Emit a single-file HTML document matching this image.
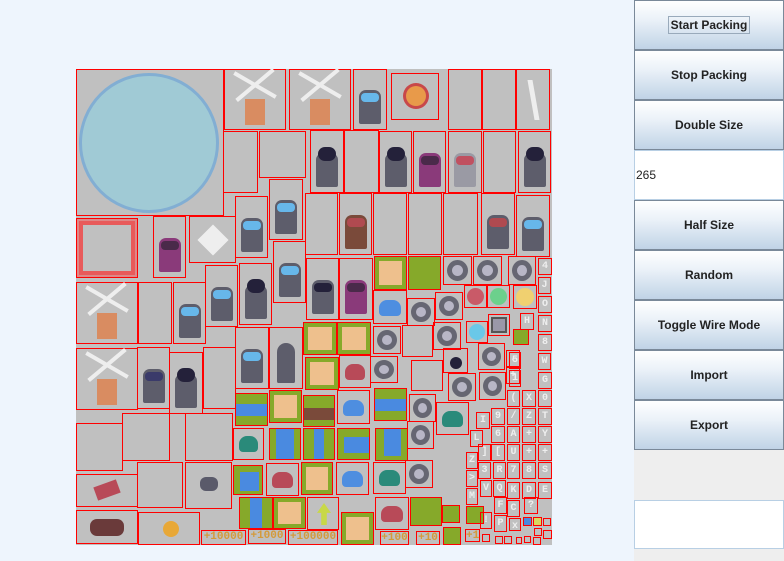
<!DOCTYPE html>
<html><head><meta charset="utf-8"><style>
*{margin:0;padding:0;box-sizing:border-box}
body{width:784px;height:561px;background:#eef5fd;position:relative;overflow:hidden;font-family:"Liberation Sans",sans-serif}
#atlas{position:absolute;left:76px;top:69px;width:476px;height:476px;background:#c0c0c0}
.b{position:absolute;border:1px solid #f00}
.tw{position:absolute;left:50%;bottom:5px;width:22px;height:34px;margin-left:-11px;background:#5d5d6b;border-radius:7px 7px 2px 2px}
.tw i{position:absolute;left:2px;right:2px;top:3px;height:9px;background:#67b7ea;border-radius:4px}
.tw.p{background:#8a3a7a}.tw.p i{background:#4a2a4a}
.tw.k i{background:#24213a;height:14px;top:-6px;border-radius:7px}
.wm{position:absolute;left:50%;bottom:4px;width:20px;height:26px;margin-left:-10px;background:#d98c61}
.wm:before{content:"";position:absolute;left:-14px;top:-16px;width:48px;height:4px;background:#eee;transform:rotate(30deg)}
.wm:after{content:"";position:absolute;left:-14px;top:-16px;width:48px;height:4px;background:#eee;transform:rotate(-40deg)}
.gr{background:#86a92a}
.sd{position:absolute;left:4px;top:4px;right:4px;bottom:4px;background:#eec08d}
.rg{position:absolute;left:3px;top:3px;right:3px;bottom:3px;border-radius:50%;border:5px solid #666672;background:#b8b6c6}
.sl{position:absolute;left:5px;right:5px;bottom:7px;height:16px;border-radius:8px 8px 4px 4px;background:#4e8ee0}
.lt{font:bold 10px "Liberation Mono",monospace;color:#eee;text-align:center;line-height:15px}
.pl{font:bold 11px "Liberation Mono",monospace;color:#d49a3a;text-align:center;line-height:12px}
#panel{position:absolute;left:634px;top:0;width:150px;height:561px;background:#eeeeee}
.btn{position:absolute;left:0;width:150px;height:50px;border:1px solid #7a8999;background:linear-gradient(#ffffff,#eaf1f8 40%,#c0d3e6);font-weight:bold;font-size:12px;color:#222;text-align:center;line-height:48px}
.tf{position:absolute;left:0;width:150px;height:50px;background:#fff;border:1px solid #b8cfe4;font-size:12px;color:#222;line-height:48px;padding-left:1px}
</style></head><body>
<div id="atlas"></div>
<!-- circle -->
<div class="b" style="left:76px;top:69px;width:148px;height:147px"><div style="position:absolute;left:2px;top:3px;width:140px;height:140px;border-radius:50%;background:#a0cad5;border:3px solid #82aed3"></div></div>
<!-- row A -->
<div class="b" style="left:224px;top:69px;width:62px;height:61px"><div class="wm"></div></div>
<div class="b" style="left:289px;top:69px;width:62px;height:61px"><div class="wm"></div></div>
<div class="b" style="left:353px;top:69px;width:34px;height:61px"><div class="tw"><i></i></div></div>
<div class="b" style="left:391px;top:73px;width:48px;height:47px"><div style="position:absolute;left:14px;top:12px;width:20px;height:20px;background:#e89a4a;border-radius:50%;box-shadow:0 0 0 3px #c8484a"></div></div>
<div class="b" style="left:448px;top:69px;width:34px;height:61px"></div>
<div class="b" style="left:482px;top:69px;width:34px;height:61px"></div>
<div class="b" style="left:516px;top:69px;width:34px;height:61px"><div style="position:absolute;left:14px;top:10px;width:5px;height:40px;background:#eee;transform:skewX(10deg)"></div></div>
<!-- row B -->
<div class="b" style="left:223px;top:131px;width:35px;height:62px"></div>
<div class="b" style="left:259px;top:131px;width:47px;height:47px"></div>
<div class="b" style="left:310px;top:130px;width:34px;height:63px"><div class="tw k"><i></i></div></div>
<div class="b" style="left:344px;top:130px;width:35px;height:63px"></div>
<div class="b" style="left:379px;top:131px;width:33px;height:62px"><div class="tw k"><i></i></div></div>
<div class="b" style="left:413px;top:131px;width:33px;height:62px"><div class="tw p"><i></i></div></div>
<div class="b" style="left:448px;top:131px;width:34px;height:62px"><div class="tw" style="background:#9a9aa4"><i style="background:#c05060"></i></div></div>
<div class="b" style="left:483px;top:131px;width:33px;height:62px"></div>
<div class="b" style="left:518px;top:131px;width:33px;height:62px"><div class="tw k"><i></i></div></div>
<!-- row C -->
<div class="b" style="left:76px;top:218px;width:62px;height:60px"><div style="position:absolute;left:2px;top:2px;right:2px;bottom:2px;border:4px solid #e85a5a;outline:2px solid #d88"></div></div>
<div class="b" style="left:153px;top:216px;width:33px;height:62px"><div class="tw p"><i></i></div></div>
<div class="b" style="left:189px;top:216px;width:47px;height:47px"><div style="position:absolute;left:12px;top:12px;width:22px;height:22px;background:#eee;transform:rotate(45deg)"></div></div>
<div class="b" style="left:235px;top:196px;width:33px;height:62px"><div class="tw"><i></i></div></div>
<div class="b" style="left:269px;top:179px;width:34px;height:61px"><div class="tw"><i></i></div></div>
<div class="b" style="left:305px;top:193px;width:33px;height:62px"></div>
<div class="b" style="left:339px;top:193px;width:33px;height:62px"><div class="tw" style="background:#7a4a3a"><i style="background:#b04a50"></i></div></div>
<div class="b" style="left:373px;top:193px;width:34px;height:62px"></div>
<div class="b" style="left:408px;top:193px;width:34px;height:62px"></div>
<div class="b" style="left:443px;top:193px;width:35px;height:62px"></div>
<div class="b" style="left:481px;top:193px;width:34px;height:62px"><div class="tw"><i style="background:#b04a50"></i></div></div>
<div class="b" style="left:516px;top:195px;width:34px;height:62px"><div class="tw"><i></i></div></div>
<!-- row D -->
<div class="b" style="left:76px;top:282px;width:62px;height:62px"><div class="wm"></div></div>
<div class="b" style="left:138px;top:282px;width:34px;height:62px"></div>
<div class="b" style="left:173px;top:282px;width:33px;height:62px"><div class="tw"><i></i></div></div>
<div class="b" style="left:205px;top:265px;width:33px;height:62px"><div class="tw"><i></i></div></div>
<div class="b" style="left:239px;top:263px;width:33px;height:62px"><div class="tw k"><i></i></div></div>
<div class="b" style="left:273px;top:241px;width:33px;height:62px"><div class="tw"><i></i></div></div>
<div class="b" style="left:306px;top:258px;width:33px;height:62px"><div class="tw"><i style="background:#24213a"></i></div></div>
<div class="b" style="left:339px;top:258px;width:34px;height:62px"><div class="tw p"><i></i></div></div>
<div class="b gr" style="left:374px;top:256px;width:33px;height:34px"><div class="sd"></div></div>
<div class="b gr" style="left:408px;top:256px;width:33px;height:34px"></div>
<div class="b" style="left:443px;top:256px;width:29px;height:29px"><div class="rg"></div></div>
<div class="b" style="left:473px;top:256px;width:29px;height:29px"><div class="rg"></div></div>
<div class="b" style="left:508px;top:256px;width:28px;height:29px"><div class="rg"></div></div>
<!-- row E -->
<div class="b" style="left:76px;top:348px;width:62px;height:62px"><div class="wm"></div></div>
<div class="b" style="left:137px;top:347px;width:33px;height:62px"><div class="tw"><i style="background:#3a3a6a"></i></div></div>
<div class="b" style="left:169px;top:352px;width:34px;height:62px"><div class="tw k"><i></i></div></div>
<div class="b" style="left:203px;top:347px;width:33px;height:62px"></div>
<div class="b" style="left:235px;top:327px;width:34px;height:62px"><div class="tw"><i></i></div></div>
<div class="b" style="left:269px;top:327px;width:34px;height:62px"><div class="tw" style="width:18px;margin-left:-9px;height:40px;border-radius:10px 10px 2px 2px"></div></div>
<div class="b gr" style="left:303px;top:322px;width:34px;height:33px"><div class="sd"></div></div>
<div class="b gr" style="left:337px;top:322px;width:34px;height:33px"><div class="sd"></div></div>
<div class="b gr" style="left:305px;top:357px;width:34px;height:33px"><div class="sd"></div></div>
<div class="b" style="left:339px;top:355px;width:32px;height:33px"><div class="sl" style="background:#b84a58"></div></div>
<div class="b" style="left:373px;top:290px;width:34px;height:34px"><div class="sl"></div></div>
<div class="b" style="left:407px;top:298px;width:28px;height:28px"><div class="rg"></div></div>
<div class="b" style="left:435px;top:292px;width:28px;height:28px"><div class="rg"></div></div>
<div class="b" style="left:373px;top:326px;width:28px;height:28px"><div class="rg"></div></div>
<div class="b" style="left:402px;top:325px;width:31px;height:32px"></div>
<div class="b" style="left:433px;top:322px;width:28px;height:28px"><div class="rg"></div></div>
<div class="b" style="left:370px;top:356px;width:28px;height:27px"><div class="rg"></div></div>
<div class="b" style="left:411px;top:360px;width:32px;height:31px"></div>
<div class="b" style="left:443px;top:348px;width:25px;height:25px"><div style="position:absolute;left:6px;top:8px;width:12px;height:12px;border-radius:50%;background:#24213a"></div></div>
<div class="b" style="left:478px;top:343px;width:27px;height:27px"><div class="rg"></div></div>
<div class="b" style="left:448px;top:373px;width:28px;height:28px"><div class="rg"></div></div>
<div class="b" style="left:479px;top:372px;width:27px;height:28px"><div class="rg"></div></div>
<div class="b" style="left:464px;top:285px;width:23px;height:23px"><div style="position:absolute;left:2px;top:2px;width:17px;height:17px;border-radius:50%;background:#c95a68"></div></div>
<div class="b" style="left:487px;top:285px;width:23px;height:23px"><div style="position:absolute;left:2px;top:2px;width:17px;height:17px;border-radius:50%;background:#6cd08c"></div></div>
<div class="b" style="left:513px;top:285px;width:24px;height:24px"><div style="position:absolute;left:2px;top:2px;width:18px;height:18px;border-radius:50%;background:#f0d070"></div></div>
<div class="b" style="left:466px;top:321px;width:22px;height:22px"><div style="position:absolute;left:2px;top:2px;width:16px;height:16px;border-radius:50%;background:#6ac8e8"></div></div>
<div class="b" style="left:488px;top:314px;width:22px;height:22px"><div style="position:absolute;left:2px;top:2px;width:16px;height:16px;background:#9a98a8;border:2px solid #555"></div></div>
<div class="b gr" style="left:513px;top:329px;width:16px;height:16px"></div>
<!-- row F -->
<div class="b" style="left:76px;top:423px;width:47px;height:48px"></div>
<div class="b" style="left:122px;top:413px;width:48px;height:48px"></div>
<div class="b" style="left:185px;top:413px;width:48px;height:48px"></div>
<div class="b gr" style="left:235px;top:393px;width:33px;height:33px"><div style="position:absolute;left:0;right:0;top:10px;height:12px;background:#4a8ae0"></div></div>
<div class="b" style="left:233px;top:428px;width:31px;height:32px"><div class="sl" style="background:#2a8a7a"></div></div>
<div class="b gr" style="left:269px;top:390px;width:33px;height:33px"><div class="sd"></div></div>
<div class="b gr" style="left:269px;top:428px;width:32px;height:32px"><div style="position:absolute;left:6px;right:6px;top:0;bottom:0;background:#4a8ae0"></div></div>
<div class="b gr" style="left:303px;top:395px;width:32px;height:32px"><div style="position:absolute;left:0;right:0;top:12px;height:12px;background:#7a4a3a"></div></div>
<div class="b gr" style="left:303px;top:428px;width:32px;height:32px"><div style="position:absolute;left:10px;right:10px;top:0;bottom:0;background:#4a8ae0"></div></div>
<div class="b" style="left:337px;top:390px;width:33px;height:34px"><div class="sl"></div></div>
<div class="b gr" style="left:337px;top:428px;width:33px;height:32px"><div style="position:absolute;left:6px;right:0;top:8px;bottom:6px;background:#4a8ae0"></div></div>
<div class="b gr" style="left:374px;top:388px;width:33px;height:33px"><div style="position:absolute;left:0;right:0;top:10px;height:12px;background:#4a8ae0"></div></div>
<div class="b gr" style="left:375px;top:428px;width:33px;height:33px"><div style="position:absolute;left:8px;right:6px;top:0;bottom:4px;background:#4a8ae0"></div></div>
<div class="b" style="left:409px;top:394px;width:27px;height:28px"><div class="rg"></div></div>
<div class="b" style="left:407px;top:421px;width:27px;height:28px"><div class="rg"></div></div>
<div class="b" style="left:436px;top:402px;width:33px;height:33px"><div class="sl" style="background:#2a8a7a"></div></div>
<!-- row G -->
<div class="b" style="left:76px;top:474px;width:62px;height:33px"><div style="position:absolute;left:18px;top:8px;width:24px;height:14px;background:#b84a58;transform:rotate(-20deg)"></div></div>
<div class="b" style="left:137px;top:462px;width:46px;height:46px"></div>
<div class="b" style="left:185px;top:462px;width:47px;height:47px"><div style="position:absolute;left:14px;top:14px;width:18px;height:14px;border-radius:6px;background:#5a5a6a"></div></div>
<div class="b gr" style="left:233px;top:465px;width:30px;height:30px"><div style="position:absolute;left:6px;right:3px;top:6px;bottom:3px;background:#4a8ae0"></div></div>
<div class="b" style="left:266px;top:463px;width:33px;height:33px"><div class="sl" style="background:#b84a58"></div></div>
<div class="b gr" style="left:301px;top:462px;width:32px;height:33px"><div class="sd"></div></div>
<div class="b" style="left:336px;top:462px;width:33px;height:33px"><div class="sl"></div></div>
<div class="b" style="left:373px;top:462px;width:33px;height:32px"><div class="sl" style="background:#2a8a7a"></div></div>
<div class="b" style="left:405px;top:460px;width:28px;height:28px"><div class="rg"></div></div>
<!-- row H -->
<div class="b" style="left:76px;top:510px;width:62px;height:34px"><div style="position:absolute;left:13px;top:8px;width:34px;height:17px;border-radius:7px;background:#6a3a3a"></div></div>
<div class="b" style="left:138px;top:512px;width:62px;height:33px"><div style="position:absolute;left:24px;top:8px;width:16px;height:16px;border-radius:50%;background:#e8a838"></div></div>
<div class="b gr" style="left:239px;top:497px;width:34px;height:32px"><div style="position:absolute;left:10px;right:10px;top:0;bottom:0;background:#4a8ae0"></div></div>
<div class="b gr" style="left:273px;top:497px;width:33px;height:32px"><div class="sd"></div></div>
<div class="b" style="left:307px;top:497px;width:32px;height:33px"><div style="position:absolute;left:9px;top:5px;width:14px;height:22px;background:#c8d848;clip-path:polygon(50% 0,100% 45%,70% 45%,70% 100%,30% 100%,30% 45%,0 45%)"></div></div>
<div class="b gr" style="left:341px;top:512px;width:33px;height:33px"><div class="sd"></div></div>
<div class="b" style="left:375px;top:497px;width:34px;height:33px"><div class="sl" style="background:#b84a58"></div></div>
<div class="b gr" style="left:410px;top:497px;width:32px;height:29px"></div>
<div class="b gr" style="left:442px;top:505px;width:18px;height:18px"></div>
<div class="b gr" style="left:466px;top:506px;width:18px;height:18px"></div>
<div class="b gr" style="left:443px;top:527px;width:18px;height:18px"></div>
<div class="b pl" style="left:201px;top:530px;width:45px;height:15px">+10000</div>
<div class="b pl" style="left:248px;top:529px;width:38px;height:15px">+1000</div>
<div class="b pl" style="left:288px;top:530px;width:50px;height:15px">+100000</div>
<div class="b pl" style="left:380px;top:531px;width:29px;height:14px">+100</div>
<div class="b pl" style="left:416px;top:531px;width:24px;height:14px">+10</div>
<div class="b pl" style="left:465px;top:529px;width:15px;height:13px">+1</div>
<!-- letters -->
<div class="b lt" style="left:538px;top:258px;width:14px;height:17px">4</div>
<div class="b lt" style="left:538px;top:277px;width:13px;height:17px">J</div>
<div class="b lt" style="left:538px;top:296px;width:14px;height:17px">O</div>
<div class="b lt" style="left:520px;top:313px;width:14px;height:17px">H</div>
<div class="b lt" style="left:538px;top:315px;width:14px;height:17px">N</div>
<div class="b lt" style="left:538px;top:334px;width:14px;height:17px">8</div>
<div class="b lt" style="left:538px;top:353px;width:13px;height:17px">W</div>
<div class="b lt" style="left:506px;top:350px;width:14px;height:17px">.</div>
<div class="b lt" style="left:506px;top:367px;width:14px;height:17px">+</div>
<div class="b lt" style="left:509px;top:352px;width:12px;height:17px">5</div>
<div class="b lt" style="left:509px;top:370px;width:12px;height:17px">1</div>
<div class="b lt" style="left:538px;top:372px;width:14px;height:17px">G</div>
<div class="b lt" style="left:538px;top:390px;width:14px;height:17px">0</div>
<div class="b lt" style="left:538px;top:408px;width:14px;height:17px">T</div>
<div class="b lt" style="left:538px;top:426px;width:14px;height:17px">Y</div>
<div class="b lt" style="left:538px;top:444px;width:14px;height:17px">+</div>
<div class="b lt" style="left:538px;top:462px;width:14px;height:17px">S</div>
<div class="b lt" style="left:538px;top:482px;width:14px;height:17px">E</div>
<div class="b lt" style="left:524px;top:497px;width:14px;height:17px">?</div>
<div class="b lt" style="left:522px;top:390px;width:14px;height:17px">X</div>
<div class="b lt" style="left:522px;top:408px;width:14px;height:17px">Z</div>
<div class="b lt" style="left:522px;top:426px;width:14px;height:17px">+</div>
<div class="b lt" style="left:522px;top:444px;width:14px;height:17px">+</div>
<div class="b lt" style="left:522px;top:462px;width:14px;height:17px">8</div>
<div class="b lt" style="left:522px;top:482px;width:14px;height:17px">D</div>
<div class="b lt" style="left:507px;top:390px;width:13px;height:17px">(</div>
<div class="b lt" style="left:507px;top:408px;width:13px;height:17px">/</div>
<div class="b lt" style="left:507px;top:426px;width:13px;height:17px">A</div>
<div class="b lt" style="left:507px;top:444px;width:13px;height:17px">U</div>
<div class="b lt" style="left:507px;top:462px;width:13px;height:17px">7</div>
<div class="b lt" style="left:507px;top:482px;width:13px;height:17px">K</div>
<div class="b lt" style="left:507px;top:500px;width:13px;height:17px">C</div>
<div class="b lt" style="left:491px;top:408px;width:14px;height:17px">9</div>
<div class="b lt" style="left:491px;top:426px;width:14px;height:17px">6</div>
<div class="b lt" style="left:491px;top:444px;width:14px;height:17px">[</div>
<div class="b lt" style="left:493px;top:462px;width:13px;height:17px">R</div>
<div class="b lt" style="left:493px;top:480px;width:13px;height:17px">Q</div>
<div class="b lt" style="left:494px;top:497px;width:13px;height:17px">F</div>
<div class="b lt" style="left:494px;top:515px;width:13px;height:17px">P</div>
<div class="b lt" style="left:476px;top:412px;width:14px;height:17px">I</div>
<div class="b lt" style="left:470px;top:430px;width:13px;height:17px">L</div>
<div class="b lt" style="left:478px;top:444px;width:13px;height:17px">]</div>
<div class="b lt" style="left:478px;top:462px;width:13px;height:17px">3</div>
<div class="b lt" style="left:466px;top:452px;width:12px;height:17px">Z</div>
<div class="b lt" style="left:466px;top:470px;width:12px;height:17px">&gt;</div>
<div class="b lt" style="left:466px;top:488px;width:12px;height:17px">M</div>
<div class="b lt" style="left:480px;top:480px;width:12px;height:17px">V</div>
<div class="b lt" style="left:480px;top:512px;width:12px;height:17px">!</div>
<div class="b lt" style="left:509px;top:518px;width:12px;height:13px">x</div>
<div class="b" style="left:523px;top:517px;width:9px;height:9px;background:#4a8ae0"></div>
<div class="b" style="left:533px;top:517px;width:9px;height:9px;background:#d8d860"></div>
<div class="b" style="left:495px;top:536px;width:8px;height:8px"></div>
<div class="b" style="left:504px;top:536px;width:8px;height:8px"></div>
<div class="b" style="left:516px;top:537px;width:6px;height:7px"></div>
<div class="b" style="left:524px;top:536px;width:7px;height:7px"></div>
<div class="b" style="left:534px;top:528px;width:8px;height:8px"></div>
<div class="b" style="left:543px;top:530px;width:9px;height:9px"></div>
<div class="b" style="left:543px;top:518px;width:8px;height:8px"></div>
<div class="b" style="left:533px;top:537px;width:8px;height:8px"></div>
<div class="b" style="left:482px;top:534px;width:8px;height:8px"></div>

<div id="panel">
<div class="btn" style="top:0"><span style="border:1px solid #9ab;padding:1px 2px">Start Packing</span></div>
<div class="btn" style="top:50px">Stop Packing</div>
<div class="btn" style="top:100px">Double Size</div>
<div class="tf" style="top:150px">265</div>
<div class="btn" style="top:200px">Half Size</div>
<div class="btn" style="top:250px">Random</div>
<div class="btn" style="top:300px">Toggle Wire Mode</div>
<div class="btn" style="top:350px">Import</div>
<div class="btn" style="top:400px">Export</div>
<div class="tf" style="top:500px;height:49px"></div>
</div>
</body></html>
